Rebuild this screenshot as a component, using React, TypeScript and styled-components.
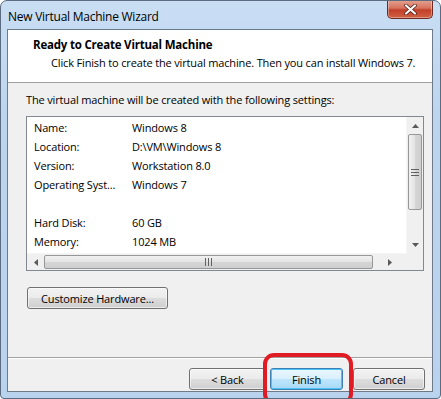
import React from "react";
import styled, { createGlobalStyle } from "styled-components";

const Global = createGlobalStyle`
  html, body {
    margin: 0;
    padding: 0;
    background: #ffffff;
  }
  body {
    font-family: "Open Sans", "Liberation Sans", sans-serif;
    font-size: 11px;
    letter-spacing: -0.15px;
    color: #000;
  }
`;

const Window = styled.div`
  width: 441px;
  height: 399px;
  box-sizing: border-box;
  display: flex;
  flex-direction: column;
  padding: 0 7px 6px 6px;
  border: 1px solid #5b6b80;
  border-radius: 7px 7px 4px 4px;
  background: linear-gradient(180deg, #c9def3 0%, #bcd4ee 30%, #b9d2ed 100%);
  overflow: hidden;
  position: relative;
`;

const TitleBar = styled.div`
  height: 28px;
  display: flex;
  align-items: flex-start;
  justify-content: space-between;
`;

const Title = styled.div`
  padding: 7px 0 0 1px;
  font-size: 12px;
  letter-spacing: -0.25px;
  color: #000;
`;

const CloseButton = styled.div`
  width: 46px;
  height: 19px;
  margin-top: -1px;
  box-sizing: border-box;
  border: 1px solid #6b2a24;
  border-top: none;
  border-radius: 0 0 5px 5px;
  background: linear-gradient(180deg, #e7a393 0%, #d6725d 45%, #c2402a 55%, #d0603f 100%);
  display: flex;
  align-items: center;
  justify-content: center;
  box-shadow: inset 0 0 0 1px rgba(255, 255, 255, 0.35);
`;

const Client = styled.div`
  flex: 1;
  display: flex;
  flex-direction: column;
  border: 1px solid #6d7a89;
  background: #f0f0f0;
`;

const Header = styled.div`
  height: 53px;
  box-sizing: border-box;
  background: #ffffff;
  border-bottom: 1px solid #a0a0a0;
  padding: 7px 0 0 25px;
`;

const HeaderTitle = styled.div`
  font-weight: 700;
  font-size: 11.5px;
  letter-spacing: -0.2px;
  line-height: 16px;
`;

const HeaderText = styled.div`
  margin: 2px 0 0 18px;
  line-height: 16px;
  white-space: nowrap;
`;

const Body = styled.div`
  flex: 1;
  display: flex;
  flex-direction: column;
  align-items: flex-start;
  padding: 9px 10px 0 18px;
  border-bottom: 1px solid #a0a0a0;
`;

const Intro = styled.div`
  line-height: 16px;
`;

const ListBox = styled.div`
  margin-top: 8px;
  width: 398px;
  height: 155px;
  box-sizing: border-box;
  border: 1px solid #828790;
  background: #ffffff;
  display: grid;
  grid-template-columns: 1fr 17px;
  grid-template-rows: 1fr 17px;
`;

const Rows = styled.div`
  padding: 1px 0 0 7px;
  overflow: hidden;
`;

const Row = styled.div`
  height: 19px;
  display: flex;
  align-items: center;
  white-space: nowrap;
`;

const Label = styled.span`
  width: 98px;
  flex: none;
`;

const VScroll = styled.div`
  background: #f0f0f0;
  border-left: 1px solid #f5f5f5;
  display: flex;
  flex-direction: column;
  align-items: center;
`;

const HScroll = styled.div`
  background: #f0f0f0;
  border-top: 1px solid #f5f5f5;
  display: flex;
  align-items: center;
`;

const Corner = styled.div`
  background: #f0f0f0;
`;

const ArrowBox = styled.div<{ $w: number; $h: number }>`
  width: ${(p) => p.$w}px;
  height: ${(p) => p.$h}px;
  flex: none;
  display: flex;
  align-items: center;
  justify-content: center;
`;

const Spacer = styled.div`
  flex: 1;
`;

const VThumb = styled.div`
  width: 14px;
  height: 76px;
  box-sizing: border-box;
  border: 1px solid #979797;
  border-radius: 2px;
  background: linear-gradient(90deg, #f1f1f1 0%, #e3e3e3 50%, #d6d6d6 51%, #cfcfcf 100%);
  display: flex;
  align-items: center;
  justify-content: center;
`;

const HThumb = styled.div`
  flex: 1;
  height: 14px;
  box-sizing: border-box;
  border: 1px solid #979797;
  border-radius: 2px;
  background: linear-gradient(180deg, #f1f1f1 0%, #e3e3e3 50%, #d6d6d6 51%, #cfcfcf 100%);
  display: flex;
  align-items: center;
  justify-content: center;
`;

const Button = styled.div<{ $focused?: boolean }>`
  height: 22px;
  box-sizing: border-box;
  border: 1px solid ${(p) => (p.$focused ? "#3c7fb1" : "#707070")};
  border-radius: 3px;
  background: ${(p) =>
    p.$focused
      ? "linear-gradient(180deg, #eaf6fd 0%, #d9f0fc 50%, #bee6fd 51%, #a7d9f5 100%)"
      : "linear-gradient(180deg, #f2f2f2 0%, #ebebeb 50%, #dddddd 51%, #cfcfcf 100%)"};
  box-shadow: inset 0 0 0 1px ${(p) => (p.$focused ? "#4ec2f7" : "rgba(255,255,255,0.6)")};
  display: flex;
  align-items: center;
  justify-content: center;
`;

const CustomizeButton = styled(Button)`
  margin-top: 16px;
  margin-left: 1px;
  width: 141px;
`;

const Footer = styled.div`
  height: 33px;
  box-sizing: border-box;
  border-top: 1px solid #ffffff;
  display: flex;
  align-items: flex-start;
  justify-content: flex-end;
  gap: 4px;
  padding: 9px 7px 0 0;
`;

const FooterButton = styled(Button)<{ $width: number; $gap?: number }>`
  width: ${(p) => p.$width}px;
  margin-left: ${(p) => p.$gap ?? 0}px;
`;

const Highlight = styled.div`
  position: absolute;
  left: 262px;
  top: 352px;
  width: 90px;
  height: 52px;
  box-sizing: border-box;
  border: 4px solid #e01b24;
  border-radius: 11px;
  pointer-events: none;
`;

const Tri = ({ dir }: { dir: "up" | "down" | "left" | "right" }) => {
  const pts = {
    up: "0,4 3.5,0 7,4",
    down: "0,0 3.5,4 7,0",
    left: "4,0 0,3.5 4,7",
    right: "0,0 4,3.5 0,7",
  }[dir];
  const vertical = dir === "up" || dir === "down";
  return (
    <svg width={vertical ? 7 : 4} height={vertical ? 4 : 7} viewBox={vertical ? "0 0 7 4" : "0 0 4 7"}>
      <polygon points={pts} fill="#5a5a5a" />
    </svg>
  );
};

const Grip = ({ vertical }: { vertical?: boolean }) => (
  <svg width={vertical ? 8 : 7} height={vertical ? 7 : 8} viewBox={vertical ? "0 0 8 7" : "0 0 7 8"}>
    {[0, 3, 6].map((o) =>
      vertical ? (
        <rect key={o} x={0} y={o} width={8} height={1} fill="#606060" />
      ) : (
        <rect key={o} x={o} y={0} width={1} height={8} fill="#606060" />
      )
    )}
  </svg>
);

const settings: [string, string][] = [
  ["Name:", "Windows 8"],
  ["Location:", "D:\\VM\\Windows 8"],
  ["Version:", "Workstation 8.0"],
  ["Operating Syst...", "Windows 7"],
  ["", ""],
  ["Hard Disk:", "60 GB"],
  ["Memory:", "1024 MB"],
];

export default function App() {
  return (
    <>
      <Global />
      <Window>
        <TitleBar>
          <Title>New Virtual Machine Wizard</Title>
          <CloseButton>
            <svg width="13" height="11" viewBox="0 0 13 11">
              <path d="M2 1.5 L11 9.5 M11 1.5 L2 9.5" stroke="#4a1a14" strokeWidth="3.6" strokeLinecap="round" />
              <path d="M2 1.5 L11 9.5 M11 1.5 L2 9.5" stroke="#ffffff" strokeWidth="2.2" strokeLinecap="round" />
            </svg>
          </CloseButton>
        </TitleBar>
        <Client>
          <Header>
            <HeaderTitle>Ready to Create Virtual Machine</HeaderTitle>
            <HeaderText>
              Click Finish to create the virtual machine. Then you can install Windows 7.
            </HeaderText>
          </Header>
          <Body>
            <Intro>The virtual machine will be created with the following settings:</Intro>
            <ListBox>
              <Rows>
                {settings.map(([k, v], i) => (
                  <Row key={i}>
                    <Label>{k}</Label>
                    <span>{v}</span>
                  </Row>
                ))}
              </Rows>
              <VScroll>
                <ArrowBox $w={17} $h={17}>
                  <Tri dir="up" />
                </ArrowBox>
                <VThumb>
                  <Grip vertical />
                </VThumb>
                <Spacer />
                <ArrowBox $w={17} $h={17}>
                  <Tri dir="down" />
                </ArrowBox>
              </VScroll>
              <HScroll>
                <ArrowBox $w={17} $h={17}>
                  <Tri dir="left" />
                </ArrowBox>
                <HThumb>
                  <Grip />
                </HThumb>
                <ArrowBox $w={33} $h={17}>
                  <Tri dir="right" />
                </ArrowBox>
              </HScroll>
              <Corner />
            </ListBox>
            <CustomizeButton>Customize Hardware...</CustomizeButton>
          </Body>
          <Footer>
            <FooterButton $width={77}>&lt; Back</FooterButton>
            <FooterButton $width={73} $focused>
              Finish
            </FooterButton>
            <FooterButton $width={72} $gap={6}>
              Cancel
            </FooterButton>
          </Footer>
        </Client>
        <Highlight />
      </Window>
    </>
  );
}
